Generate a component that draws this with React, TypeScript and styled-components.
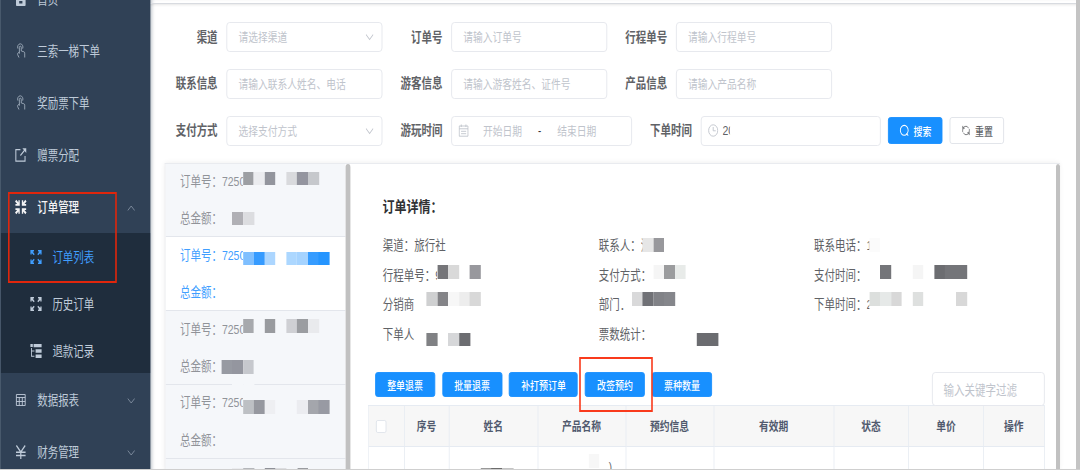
import React from "react";
import styled, { createGlobalStyle, css } from "styled-components";

/* The console is laid out on a 1350px wide canvas and condensed horizontally. */
const SQUEEZE = 0.8;

const GlobalStyle = createGlobalStyle`
  * { box-sizing: border-box; }
  html, body { margin: 0; padding: 0; overflow: hidden; background: #fff; }
  body {
    font-family: "Liberation Sans", "Noto Sans CJK SC", sans-serif;
    font-size: 13.1px;
    color: #606266;
  }
`;

const Viewport = styled.div`
  width: 1080px;
  height: 470px;
  overflow: hidden;
`;

const Page = styled.div`
  position: relative;
  display: flex;
  width: ${1080 / SQUEEZE}px;
  height: 470px;
  overflow: hidden;
  transform: scaleX(${SQUEEZE});
  transform-origin: 0 0;
  white-space: nowrap;
`;

/* ---------- sidebar ---------- */
const Sidebar = styled.nav`
  position: relative;
  flex: none;
  width: 188px;
  height: 470px;
  overflow: hidden;
  background: #304156;
  border-left: 1px solid #4f5f72;
`;

const MenuList = styled.div`
  display: flex;
  flex-direction: column;
  margin-top: -28px;
`;

const MenuItem = styled.div<{ $open?: boolean }>`
  display: flex;
  flex: none;
  align-items: center;
  height: 52.2px;
  padding: 3px 19px 0 17.5px;
  color: ${(p) => (p.$open ? "#f4f4f5" : "#bfcbd9")};
  font-weight: ${(p) => (p.$open ? 500 : 400)};
`;

const SubMenu = styled.div`
  background: #1f2d3d;
`;

const SubItem = styled.div<{ $active?: boolean }>`
  display: flex;
  align-items: center;
  height: 46.8px;
  padding: 3.5px 0 0 36.5px;
  color: ${(p) => (p.$active ? "#409eff" : "#bfcbd9")};
`;

const MenuIcon = styled.svg`
  flex: none;
  width: 14px;
  height: 14px;
  margin: 0 14px 2px 0;
  overflow: visible;
`;

const MenuLabel = styled.span`
  flex: 1;
  line-height: 20px;
`;

const Chevron = styled.svg<{ $up?: boolean }>`
  flex: none;
  width: 10px;
  height: 10px;
  ${(p) => p.$up && css`transform: rotate(180deg);`}
`;

/* ---------- main ---------- */
const Main = styled.main`
  flex: 1;
  min-width: 0;
  display: flex;
  flex-direction: column;
  background: #fff;
  box-shadow: inset 4px 0 4px -2px rgba(48, 65, 86, 0.3);
`;

const TopBar = styled.div`
  flex: none;
  height: 4px;
  border-bottom: 1px solid #d8dbe0;
  box-shadow: 0 1px 3px rgba(0, 0, 0, 0.1);
`;

const Filters = styled.form`
  display: flex;
  flex: none;
  flex-direction: column;
  gap: 16.900px;
  padding-top: 18.1px;
  height: 158.6px;
`;

const FilterRow = styled.div`
  display: flex;
  align-items: center;
  height: 30px;
`;

const FieldLabel = styled.label<{ $first?: boolean }>`
  width: ${(p) => (p.$first ? 95 : 86)}px;
  padding: 1px 11px 0 0;
  text-align: right;
  font-weight: 700;
  line-height: 20px;
  color: #606266;
`;

const Field = styled.div<{ $w?: number }>`
  display: flex;
  align-items: center;
  width: ${(p) => p.$w ?? 195}px;
  height: 30px;
  padding: 0 14px;
  border: 1px solid #e4e7ec;
  border-radius: 4px;
  background: #fff;
  color: #c0c4cc;
  font-size: 12.2px;
`;

const SelectField = styled(Field)`
  justify-content: space-between;
  padding-right: 10px;
`;

const RangeField = styled(Field)`
  padding: 0 8px;
`;

const RangePart = styled.span<{ $start?: boolean }>`
  width: 70px;
  margin-left: ${(p) => (p.$start ? 7 : 0)}px;
  text-align: center;
`;

const Dash = styled.span`
  width: 23px;
  text-align: center;
  color: #303133;
`;

/* Shows only the part of a value that is not redacted. */
const Cut = styled.span<{ $hide: number }>`
  display: inline-block;
  clip-path: inset(0 ${(p) => p.$hide}px 0 0);
`;

const CutValue = styled(Cut)`
  margin-left: 5px;
  color: #606266;
  font-size: 13.1px;
`;

const SmallIcon = styled.svg`
  flex: none;
  width: 13px;
  height: 13px;
`;

const Button = styled.button<{ $plain?: boolean; $w?: number; $h?: number }>`
  display: flex;
  align-items: center;
  justify-content: center;
  gap: 5px;
  flex: none;
  width: ${(p) => p.$w ?? 75}px;
  height: ${(p) => p.$h ?? 25}px;
  padding: 0;
  border: 1px solid ${(p) => (p.$plain ? "#dfe2e8" : "#1890ff")};
  border-radius: 3px;
  background: ${(p) => (p.$plain ? "#fff" : "#1890ff")};
  color: ${(p) => (p.$plain ? "#606266" : "#fff")};
  font: 500 11.2px "Liberation Sans", "Noto Sans CJK SC", sans-serif;
`;

const FilterActions = styled.div`
  display: flex;
  gap: 9px;
  margin-left: 9px;
`;

const Workspace = styled.section`
  display: flex;
  flex: 1;
  min-height: 0;
  margin: 0 25px 0 18px;
  border: 1px solid #e9ebef;
  border-right: 0;
  border-bottom: 0;
  box-shadow: 0 0 6px rgba(0, 0, 0, 0.08);
`;

const Rail = styled.div`
  flex: none;
  width: 5.5px;
  background: #c1c1c1;
  border-radius: 3px 3px 0 0;
`;

const OrderList = styled.div`
  flex: none;
  width: 225px;
  overflow: hidden;
`;

const OrderCard = styled.div<{ $active?: boolean }>`
  display: flex;
  flex-direction: column;
  height: 73.8px;
  padding-left: 18px;
  border-bottom: 1px solid #e3e6ec;
  background: ${(p) => (p.$active ? "#fff" : "#f5f7fa")};
  color: ${(p) => (p.$active ? "#409eff" : "#909399")};
`;

const OrderLine = styled.span`
  line-height: 37.2px;
  &:first-child { margin-top: -0.7px; }
`;

const Detail = styled.div`
  flex: 1;
  min-width: 0;
  padding: 33px 14px 0 22px;
  overflow: hidden;
`;

const DetailTitle = styled.h3`
  margin: 0 0 12.600px 18.5px;
  font-size: 15px;
  line-height: 20px;
  font-weight: 700;
  color: #303133;
`;

const InfoGrid = styled.div`
  display: grid;
  grid-template-columns: 270px 269px 1fr;
  grid-auto-rows: 29.9px;
  align-items: center;
  margin-left: 19px;
`;

const Toolbar = styled.div`
  display: flex;
  justify-content: space-between;
  height: 33px;
  margin-top: 23.4px;
  padding-left: 9.3px;
`;

const ButtonGroup = styled.div`
  display: flex;
  gap: 8.8px;
`;

const KeywordInput = styled(Field)`
  height: 34px;
  font-size: 13.1px;
`;

const Table = styled.div`
  border-left: 1px solid #e6ebf2;
  border-top: 1px solid #e6ebf2;
`;

const TableRow = styled.div<{ $head?: boolean }>`
  display: grid;
  grid-template-columns: 45px 56px 111px 110px 110px 150px 93.5px 94px 1fr;
  height: 41px;
  background: ${(p) => (p.$head ? "#f7f7f7" : "#fff")};
`;

const Cell = styled.div`
  display: flex;
  align-items: center;
  justify-content: center;
  border-right: 1px solid #e6ebf2;
  border-bottom: 1px solid #e6ebf2;
  font-size: 12.2px;
  font-weight: 700;
  color: #515a6e;
`;

const Checkbox = styled.span`
  width: 13px;
  height: 13px;
  margin-right: 12px;
  border: 1px solid #dfe3ea;
  border-radius: 2px;
  background: #fff;
`;

const CutText = styled.span`
  align-self: flex-start;
  margin: 13px 0 0 72px;
  font-weight: 400;
  color: #606266;
`;

const PageRail = styled.div`
  position: absolute;
  top: 0;
  right: 0;
  width: 5px;
  height: 470px;
  background: #c4c4c4;
`;

const BottomEdge = styled.div`
  position: absolute;
  left: 0;
  right: 0;
  bottom: 0;
  height: 1.4px;
  background: #cfcfcf;
`;

/* ---------- overlays: privacy mosaic and red callouts ---------- */
const Patch = styled.i<{ $x: number; $y: number; $w: number; $h: number; $c: string }>`
  position: absolute;
  left: ${(p) => p.$x / SQUEEZE}px;
  top: ${(p) => p.$y}px;
  width: ${(p) => p.$w / SQUEEZE}px;
  height: ${(p) => p.$h}px;
  background: ${(p) => p.$c};
`;

const Callout = styled.div<{ $x: number; $y: number; $w: number; $h: number; $c: string }>`
  position: absolute;
  left: ${(p) => p.$x / SQUEEZE}px;
  top: ${(p) => p.$y}px;
  width: ${(p) => p.$w / SQUEEZE}px;
  height: ${(p) => p.$h}px;
  border: solid ${(p) => p.$c};
  border-width: 2px 2.5px;
`;

const CELL_W = 10.82;
const mosaic: { x: number; y: number; h?: number; cells: (string | null)[] }[] = [
  { x: 243, y: 171.7, cells: ["#9d9fa3", "#ebecef", "#93959d", null, "#d9dadd", "#94959f", "#c6c8cc"] },
  { x: 232.3, y: 211.5, cells: ["#b0b0b5", "#dcdde0"] },
  { x: 243, y: 251.9, cells: ["#7fbfff", "#369bff", "#acd6ff", null, "#acd7ff", "#a5d3ff", "#369cff", "#2595ff"] },
  { x: 243, y: 319.3, cells: ["#a7a9ad", null, "#999b9f", null, "#cfd0d4", "#9b9da1", "#e9eaed"] },
  { x: 221.4, y: 360, cells: ["#979aa2", "#94969f", "#c6c8cd"] },
  { x: 232.3, y: 380, h: 7, cells: ["#f5f7fa", "#f5f7fa"] },
  { x: 243, y: 400.1, cells: ["#bdc0c4", "#96989f", "#eeeff2", null, null, "#ebecf0", "#a4a6ac", "#989aa3"] },
  { x: 232.3, y: 467.5, cells: ["#ebecef", "#b5b7bb", null, "#8f9198", "#dcdde0", null, "#9a9ca0"] },
  { x: 642.6, y: 238.4, cells: ["#e6e6e6", "#98989c"] },
  { x: 869.2, y: 238.4, cells: ["#fbfbfb"] },
  { x: 437.5, y: 265.4, cells: ["#757579", "#d9d9d9", null, "#98989d"] },
  { x: 653.4, y: 265.4, cells: ["#f5f5f5", "#9b9c9e", "#e8ebe9"] },
  { x: 880.2, y: 265.4, cells: ["#747579", null, null, "#f5f5f5", null, "#6c6d71", "#747579", "#747579"] },
  { x: 426.7, y: 292.3, cells: ["#cfd0d1", "#848488", "#f7f7f7", "#ededed", "#d8d8d8"] },
  { x: 620.9, y: 292.3, cells: ["#fff", "#d9d9da", "#707176", "#818287", "#85868b"] },
  { x: 869.4, y: 292.3, cells: ["#dcdfdd", "#e6e9e8", "#d8d8d8", null, "#dee0df", null, null, null, "#d8d8d8"] },
  { x: 426.7, y: 332.8, cells: ["#808184", null, "#d6d7d9", "#6c6d71"] },
  { x: 696.7, y: 332.8, cells: ["#6b6c70", "#6b6c70"] },
  { x: 588.6, y: 454.2, cells: ["#f7f7f7"] },
  { x: 480.7, y: 467.5, cells: ["#999", "#6c6c6c", "#c4c4c4"] },
];

function Mosaic() {
  return (
    <>
      {mosaic.flatMap((row, r) =>
        row.cells.map((c, i) =>
          c ? (
            <Patch key={`${r}-${i}`} $x={row.x + i * CELL_W} $y={row.y} $w={CELL_W + 0.1} $h={row.h ?? 13.5} $c={c} />
          ) : null
        )
      )}
    </>
  );
}

/* ---------- icons ---------- */
const HomeIcon = () => (
  <MenuIcon viewBox="0 0 14 14">
    <path fill="currentColor" fillRule="evenodd" d="M7 0 14 6H13V13Q13 14 12 14H2Q1 14 1 13V6H0ZM5 9V11.500H9V9Z" />
  </MenuIcon>
);

const TouchIcon = () => (
  <MenuIcon viewBox="0 0 14 14" fill="none" stroke="currentColor" strokeWidth="0.9" opacity="0.85">
    <path d="M3.400 4.600A3.300 3.300 0 1 1 9.300 4.600" />
    <path d="M5.200 9.700V3.400a1.200 1.200 0 0 1 2.400 0V7l3.300.8q1 .3 1 1.300V13.500M5.200 8 3.300 9.200q-.7.600-.3 1.300L4.700 13.500" />
  </MenuIcon>
);

const ShareIcon = () => (
  <MenuIcon viewBox="0 0 14 14" fill="none" stroke="currentColor" strokeWidth="1.300">
    <path d="M6.500 1.600H.8V13.200H12.300V8M6.500 7.500 12 2" />
    <path fill="currentColor" stroke="none" d="M9 .2H13.800V5Z" />
  </MenuIcon>
);

const CompressIcon = () => (
  <MenuIcon viewBox="0 0 14 14" fill="currentColor">
    {[0, 90, 180, 270].map((a) => (
      <path key={a} transform={`rotate(${a} 7 7)`} d="M1.400-.2 4 2.400V.3H5.700V5.700H.3V4H2.400L-.2 1.400Z" />
    ))}
  </MenuIcon>
);

const ExpandIcon = () => (
  <MenuIcon viewBox="0 0 14 14" fill="currentColor">
    {[0, 90, 180, 270].map((a) => (
      <path key={a} transform={`rotate(${a} 7 7)`} d="M0 0H4.500V1.600H2.900L5.300 4.200 4.200 5.300 1.600 2.900V4.500H0Z" />
    ))}
  </MenuIcon>
);

const TreeIcon = () => (
  <MenuIcon viewBox="0 0 14 14" fill="currentColor">
    <path d="M0 0H3V3H0ZM4 0H14V3.300H4ZM6.500 5.300H14V8.800H6.500ZM6.500 10.500H14V14H6.500ZM.8 4H1.900V6.500H5V7.500H1.900V11.800H5V12.800H.8Z" />
  </MenuIcon>
);

const GridIcon = () => (
  <MenuIcon viewBox="0 0 14 14" fill="none" stroke="currentColor" strokeWidth="1">
    <path d="M1.500 1.500H12.500V12.500H1.500ZM1.500 4.500H12.500M1.500 8.500H12.500M5.100 4.500V12.500M8.900 4.500V12.500" />
  </MenuIcon>
);

const YenIcon = () => (
  <MenuIcon viewBox="0 0 14 14" fill="none" stroke="currentColor" strokeWidth="1.500">
    <path d="M1.500.5 7 7 12.500.5M7 7V14M1 7.300H13M1 10.500H13" />
  </MenuIcon>
);

const Arrow = ({ up }: { up?: boolean }) => (
  <Chevron $up={up} viewBox="0 0 10 10" fill="none" stroke="#8a97a8" strokeWidth="0.9">
    <path d="M.7 2.500 5 7 9.300 2.500" />
  </Chevron>
);

const SelectArrow = () => (
  <Chevron viewBox="0 0 10 10" fill="none" stroke="#c0c4cc" strokeWidth="1.100">
    <path d="M.5 2.500 5 7.500 9.500 2.500" />
  </Chevron>
);

const CalendarIcon = () => (
  <SmallIcon viewBox="0 0 13 13" fill="none" stroke="#c0c4cc">
    <path d="M1 2H12V12.200H1ZM1 4.800H12M3.600.5V3M9.400.5V3M3.300 7.300H9.700M3.300 9.700H9.700" />
  </SmallIcon>
);

const ClockIcon = () => (
  <SmallIcon viewBox="0 0 13 13" fill="none" stroke="#c0c4cc">
    <circle cx="6.500" cy="6.500" r="5.700" />
    <path d="M6.500 3V6.800H9.700" />
  </SmallIcon>
);

const SearchIcon = () => (
  <SmallIcon viewBox="0 0 13 13" fill="none" stroke="#fff" strokeWidth="1.100">
    <circle cx="6.300" cy="6.300" r="4.900" />
    <path d="M9 9.500 11.300 11.600" />
  </SmallIcon>
);

const RefreshIcon = () => (
  <SmallIcon viewBox="0 0 13 13" fill="none" stroke="#606266" strokeWidth="0.9">
    <path d="M2.300 7.800V6.500A4 4 0 0 1 9.800 4.300M10.700 5.200V6.500A4 4 0 0 1 3.200 8.700M2.500 1.900V4.200H5M10.500 11.100V8.800H8" />
  </SmallIcon>
);

const orders = [
  { active: false },
  { active: true },
  { active: false },
  { active: false },
  { active: false },
];

/* Each entry: label with its readable value, then a partly redacted character and how much of it is hidden. */
const info: { text: string; cut?: string; hide?: number }[] = [
  { text: "渠道：旅行社" },
  { text: "联系人：", cut: "沈", hide: 10 },
  { text: "联系电话：", cut: "1", hide: 3.5 },
  { text: "行程单号：", cut: "9", hide: 5 },
  { text: "支付方式：" },
  { text: "支付时间：" },
  { text: "分销商" },
  { text: "部门：" },
  { text: "下单时间：", cut: "2", hide: 3.5 },
  { text: "下单人" },
  { text: "票数统计：" },
];

const columns = ["序号", "姓名", "产品名称", "预约信息", "有效期", "状态", "单价", "操作"];

export default function App() {
  return (
    <Viewport>
      <GlobalStyle />
      <Page>
        <Sidebar>
          <MenuList>
            <MenuItem><HomeIcon /><MenuLabel>首页</MenuLabel></MenuItem>
            <MenuItem><TouchIcon /><MenuLabel>三索一梯下单</MenuLabel></MenuItem>
            <MenuItem><TouchIcon /><MenuLabel>奖励票下单</MenuLabel></MenuItem>
            <MenuItem><ShareIcon /><MenuLabel>赠票分配</MenuLabel></MenuItem>
            <MenuItem $open><CompressIcon /><MenuLabel>订单管理</MenuLabel><Arrow up /></MenuItem>
            <SubMenu>
              <SubItem $active><ExpandIcon /><MenuLabel>订单列表</MenuLabel></SubItem>
              <SubItem><ExpandIcon /><MenuLabel>历史订单</MenuLabel></SubItem>
              <SubItem><TreeIcon /><MenuLabel>退款记录</MenuLabel></SubItem>
            </SubMenu>
            <MenuItem><GridIcon /><MenuLabel>数据报表</MenuLabel><Arrow /></MenuItem>
            <MenuItem><YenIcon /><MenuLabel>财务管理</MenuLabel><Arrow /></MenuItem>
          </MenuList>
        </Sidebar>

        <Main>
          <TopBar />
          <Filters>
            <FilterRow>
              <FieldLabel $first>渠道</FieldLabel>
              <SelectField>请选择渠道<SelectArrow /></SelectField>
              <FieldLabel>订单号</FieldLabel>
              <Field>请输入订单号</Field>
              <FieldLabel>行程单号</FieldLabel>
              <Field>请输入行程单号</Field>
            </FilterRow>
            <FilterRow>
              <FieldLabel $first>联系信息</FieldLabel>
              <Field>请输入联系人姓名、电话</Field>
              <FieldLabel>游客信息</FieldLabel>
              <Field>请输入游客姓名、证件号</Field>
              <FieldLabel>产品信息</FieldLabel>
              <Field>请输入产品名称</Field>
            </FilterRow>
            <FilterRow>
              <FieldLabel $first>支付方式</FieldLabel>
              <SelectField>选择支付方式<SelectArrow /></SelectField>
              <FieldLabel>游玩时间</FieldLabel>
              <RangeField $w={226}>
                <CalendarIcon />
                <RangePart $start>开始日期</RangePart>
                <Dash>-</Dash>
                <RangePart>结束日期</RangePart>
              </RangeField>
              <FieldLabel>下单时间</FieldLabel>
              <RangeField $w={225}>
                <ClockIcon />
                <CutValue $hide={5}>20</CutValue>
              </RangeField>
              <FilterActions>
                <Button type="button" $w={68} $h={27}><SearchIcon />搜索</Button>
                <Button type="button" $w={68} $h={27} $plain><RefreshIcon />重置</Button>
              </FilterActions>
            </FilterRow>
          </Filters>

          <Workspace>
            <OrderList>
              {orders.map((o, i) => (
                <OrderCard key={i} $active={o.active}>
                  <OrderLine>订单号：<Cut $hide={3}>7250</Cut></OrderLine>
                  <OrderLine>总金额：</OrderLine>
                </OrderCard>
              ))}
            </OrderList>
            <Rail />
            <Detail>
              <DetailTitle>订单详情：</DetailTitle>
              <InfoGrid>
                {info.map((it) => (
                  <span key={it.text}>
                    {it.text}
                    {it.cut && <Cut $hide={it.hide ?? 0}>{it.cut}</Cut>}
                  </span>
                ))}
              </InfoGrid>
              <Toolbar>
                <ButtonGroup>
                  <Button type="button">整单退票</Button>
                  <Button type="button">批量退票</Button>
                  <Button type="button" $w={86}>补打预订单</Button>
                  <Button type="button">改签预约</Button>
                  <Button type="button">票种数量</Button>
                </ButtonGroup>
                <KeywordInput $w={141}>输入关键字过滤</KeywordInput>
              </Toolbar>
              <Table>
                <TableRow $head>
                  <Cell><Checkbox /></Cell>
                  {columns.map((c) => <Cell key={c}>{c}</Cell>)}
                </TableRow>
                <TableRow>
                  <Cell />
                  <Cell />
                  <Cell />
                  <Cell><CutText>)</CutText></Cell>
                  <Cell />
                  <Cell />
                  <Cell />
                  <Cell />
                  <Cell />
                </TableRow>
              </Table>
            </Detail>
            <Rail />
          </Workspace>
        </Main>

        <Mosaic />
        <Callout $x={8} $y={191.5} $w={109} $h={91} $c="#e0260c" />
        <Callout $x={579} $y={357} $w={74} $h={55} $c="#f93a1c" />
        <PageRail />
        <BottomEdge />
      </Page>
    </Viewport>
  );
}
